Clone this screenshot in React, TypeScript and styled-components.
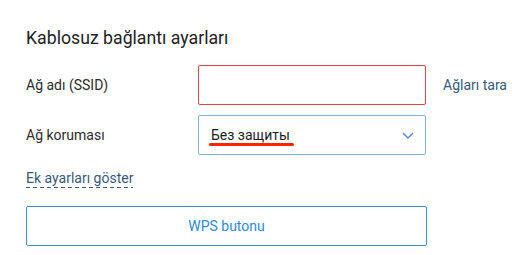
import React from "react";
import styled, { createGlobalStyle } from "styled-components";

const GlobalStyle = createGlobalStyle`
  body {
    margin: 0;
    background: #ffffff;
    font-family: Roboto, "Liberation Sans", sans-serif;
    color: #222;
  }
`;

const Page = styled.div`
  width: 530px;
  height: 255px;
  box-sizing: border-box;
  padding: 27px 0 0 26px;
`;

const Title = styled.h2`
  margin: 0 0 16px;
  font-size: 17.7px;
  line-height: 22px;
  font-weight: 400;
  color: #222;
`;

const Row = styled.div`
  display: grid;
  grid-template-columns: 172px 228px auto;
  align-items: center;
  margin-bottom: 10px;
`;

const Label = styled.label`
  font-size: 14px;
  color: #2b2b2b;
`;

const Field = styled.div<{ $invalid?: boolean }>`
  position: relative;
  height: 40px;
  box-sizing: border-box;
  border: 1px solid ${(p) => (p.$invalid ? "#e3434c" : "#7cb5e4")};
  border-radius: 2px;
  display: flex;
  align-items: center;
  padding: 0 11px 0 12px;
  justify-content: space-between;
`;

const SelectValue = styled.span`
  position: relative;
  font-size: 14px;
  color: #1e1e1e;
  &::after {
    content: "";
    position: absolute;
    left: -2px;
    right: -4px;
    bottom: -3px;
    height: 3px;
    border-radius: 2px;
    background: #ff2200;
  }
`;

const SideLink = styled.a`
  margin-left: 17px;
  white-space: nowrap;
  font-size: 14px;
  color: #35597c;
  cursor: pointer;
`;

const DashedLink = styled.a`
  display: inline-block;
  margin-top: 5px;
  font-size: 14px;
  line-height: 17px;
  color: #3a5876;
  padding-bottom: 1px;
  background-image: repeating-linear-gradient(
    to right,
    #3a5876 0 4px,
    transparent 4px 7px
  );
  background-size: 100% 1px;
  background-repeat: no-repeat;
  background-position: 0 100%;
  cursor: pointer;
`;

const WpsButton = styled.button`
  display: block;
  margin-top: 18px;
  width: 401px;
  height: 40px;
  background: #fff;
  border: 1px solid #3b8fd9;
  border-radius: 2px;
  font-family: inherit;
  font-size: 14px;
  color: #2c89d9;
  cursor: pointer;
`;

const Chevron = () => (
  <svg width="12" height="7" viewBox="0 0 12 7" fill="none">
    <path d="M1 1l5 5 5-5" stroke="#4b8ad0" strokeWidth="1.4" />
  </svg>
);

const App = () => (
  <>
    <GlobalStyle />
    <Page>
      <Title>Kablosuz bağlantı ayarları</Title>
      <Row>
        <Label>Ağ adı (SSID)</Label>
        <Field $invalid />
        <SideLink>Ağları tara</SideLink>
      </Row>
      <Row>
        <Label>Ağ koruması</Label>
        <Field>
          <SelectValue>Без защиты</SelectValue>
          <Chevron />
        </Field>
      </Row>
      <DashedLink>Ek ayarları göster</DashedLink>
      <WpsButton>WPS butonu</WpsButton>
    </Page>
  </>
);

export default App;
